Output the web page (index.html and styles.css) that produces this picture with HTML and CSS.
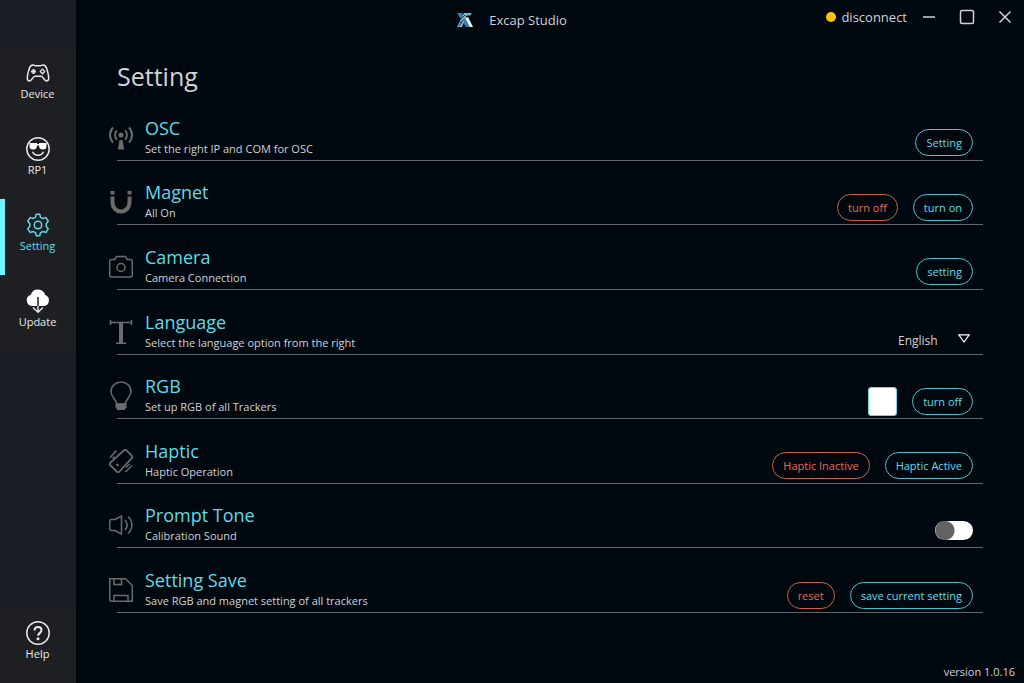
FILE: index.html
```
<!DOCTYPE html>
<html lang="en">
<head>
    <meta charset="UTF-8">
    <meta name="viewport" content="width=device-width, initial-scale=1.0">
    <title>Excap Studio</title>
    <link rel="stylesheet" href="styles.css">
</head>
<body>
    <nav class="sidebar">
        <a class="nav-item" href="#device">
            <svg class="nav-icon" viewBox="0 0 24 24">
                <path d="M7 4c1.300 0 1.600.8 2.600.8h4.800c1 0 1.300-.8 2.600-.8 2 0 3 1.300 3.700 3.400.9 2.800 2 7 2 9.600 0 2-.8 3-2.200 3-2.400 0-3.200-4.700-5.500-4.700H9C6.700 15.300 5.900 20 3.500 20c-1.400 0-2.200-1-2.200-3 0-2.600 1.100-6.800 2-9.600C4 5.300 5 4 7 4z"/>
                <path d="M7.500 8v5M5 10.500h5" stroke-width="2"/>
                <path d="M16.500 8.100l2.200 2.300-2.200 2.300-2.200-2.300z" stroke-width="1.300"/>
            </svg>
            <span>Device</span>
        </a>
        <a class="nav-item" href="#rp1">
            <svg class="nav-icon" viewBox="0 0 24 24">
                <circle cx="12" cy="12" r="11.200"/>
                <path d="M3.500 6h7.500v1h2V6h7.500v3c0 2.500-1 3.500-3.600 3.500S13.300 11.500 13 8.500h-2c-.3 3-1.300 4-3.900 4S3.500 11.500 3.500 9z" fill="#fff" stroke="none"/>
                <path d="M6.500 14.800c1 2.200 3 3.500 5.500 3.500s4.500-1.300 5.500-3.500"/>
            </svg>
            <span>RP1</span>
        </a>
        <a class="nav-item active" href="#setting">
            <svg class="nav-icon" viewBox="0 0 24 24">
                <path d="M10.300 1.200h3.400l.8 3.100 2.200 1.200 3.200-.9 2.300 3.500-2 2.700v2.400l2 2.700-2.300 3.500-3.200-.9-2.200 1.200-.8 3.100h-3.400l-.8-3.100-2.200-1.200-3.200.9-2.300-3.500 2-2.700v-2.400l-2-2.700 2.300-3.500 3.200.9 2.200-1.200z"/>
                <circle cx="12" cy="12" r="3.700"/>
            </svg>
            <span>Setting</span>
        </a>
        <a class="nav-item" href="#update">
            <svg class="nav-icon" viewBox="0 0 24 24">
                <path d="M6 17A5.800 5.800 0 0 1 4.800 5.700 7.500 7.500 0 0 1 19.200 6 5.700 5.700 0 0 1 18 17z" fill="#fff" stroke="none"/>
                <path d="M12 16v7M7 18.500l5 4.700 5-4.700"/>
                <path d="M12 8v9" class="nav-cut"/>
            </svg>
            <span>Update</span>
        </a>
        <a class="nav-item help" href="#help">
            <svg class="nav-icon" viewBox="0 0 24 24">
                <circle cx="12" cy="12" r="11.200"/>
                <path d="M8.500 9.500C8.500 7.200 10 6 12 6s3.500 1.200 3.500 3.200c0 2.600-3.400 2.800-3.400 5.600" stroke-width="2"/>
                <circle cx="12" cy="17.700" r="1.500" fill="currentColor" stroke="none"/>
            </svg>
            <span>Help</span>
        </a>
    </nav>

    <main class="content">
        <header class="titlebar">
            <div class="app-title">
                <svg class="logo" viewBox="0 0 16 14">
                    <path d="M0 0h5l9 14H9z" fill="#347db0"/>
                    <path d="M7 0h8l-2 2.500H9.500L5 14H0z" fill="#7db4cf"/>
                    <path d="M4 6l4-4M3 10l6-5M2 13l3-4" stroke="#123850" stroke-width="1"/>
                    <path d="M8 5l3-1 5 10h-3z" fill="#e3f3f7"/>
                </svg>
                <span>Excap Studio</span>
            </div>
            <div class="window-bar">
                <span class="status"><i class="status-dot"></i>disconnect</span>
                <button class="window-btn" aria-label="Minimize">
                    <svg viewBox="0 0 16 16"><path d="M2 8h12"/></svg>
                </button>
                <button class="window-btn" aria-label="Maximize">
                    <svg viewBox="0 0 16 16"><rect x="1.500" y="1.500" width="13" height="13" rx="1.500"/></svg>
                </button>
                <button class="window-btn" aria-label="Close">
                    <svg viewBox="0 0 16 16"><path d="M2.500 2.500l11 11M13.500 2.500l-11 11"/></svg>
                </button>
            </div>
        </header>

        <h1 class="page-title">Setting</h1>

        <ul class="settings">
            <li class="row">
                <svg class="row-icon" viewBox="0 0 24 24">
                    <circle cx="12" cy="9" r="2.500" class="solid"/>
                    <path d="M10.500 14h3l1.700 9.500H8.800z" class="solid"/>
                    <path d="M7.800 4.500c-2.200 2.600-2.200 6.400 0 9M16.200 4.500c2.200 2.600 2.200 6.400 0 9M4 1.500c-4 4.400-4 10.600 0 15M20 1.500c4 4.400 4 10.600 0 15" stroke-width="2"/>
                </svg>
                <div class="row-text">
                    <h2>OSC</h2>
                    <p>Set the right IP and COM for OSC</p>
                </div>
                <div class="actions">
                    <button class="btn">Setting</button>
                </div>
            </li>
            <li class="row">
                <svg class="row-icon" viewBox="0 0 24 24">
                    <path d="M3.500 6.500V13a8.500 8.500 0 0 0 17 0V6.500M3.500 1v3.500M20.500 1v3.500" stroke-width="4"/>
                </svg>
                <div class="row-text">
                    <h2>Magnet</h2>
                    <p>All On</p>
                </div>
                <div class="actions">
                    <button class="btn danger">turn off</button>
                    <button class="btn">turn on</button>
                </div>
            </li>
            <li class="row">
                <svg class="row-icon" viewBox="0 0 24 24">
                    <path d="M2.500 4.500H6l1.500-3h9l1.500 3h3.500q1.800 0 1.800 1.800v14q0 1.700-1.800 1.700h-19Q.7 22 .7 20.300v-14q0-1.800 1.800-1.800z"/>
                    <circle cx="12" cy="12.500" r="4"/>
                </svg>
                <div class="row-text">
                    <h2>Camera</h2>
                    <p>Camera Connection</p>
                </div>
                <div class="actions">
                    <button class="btn">setting</button>
                </div>
            </li>
            <li class="row">
                <svg class="row-icon" viewBox="0 0 24 24">
                    <path d="M1.500 0v5M22.500 0v5M1 2.500h22M7 23.200h10"/>
                    <path d="M12 2.500v21" stroke-width="4"/>
                </svg>
                <div class="row-text">
                    <h2>Language</h2>
                    <p id="language-hint">Select the language option from the right</p>
                </div>
                <div class="actions">
                    <select class="language" aria-labelledby="language-hint">
                        <option>English</option>
                    </select>
                    <svg class="arrow" viewBox="0 0 12 9"><path d="M.8.8h10.400L6 8z"/></svg>
                </div>
            </li>
            <li class="row">
                <svg class="row-icon tall" viewBox="0 0 24 30">
                    <path d="M8 23C7 18 2 16 2 10.500a10 9.500 0 0 1 20 0C22 16 17 18 16 23z"/>
                    <path d="M6.500 22.500h11v4l-2 2.500h-7l-2-2.500z" class="solid"/>
                </svg>
                <div class="row-text">
                    <h2>RGB</h2>
                    <p>Set up RGB of all Trackers</p>
                </div>
                <div class="actions">
                    <button class="swatch" aria-label="Color"></button>
                    <button class="btn">turn off</button>
                </div>
            </li>
            <li class="row">
                <svg class="row-icon" viewBox="0 0 24 24">
                    <path d="M15.500.8q.8-.6 1.600 0l5.900 6.400q.8.800 0 1.700L10 23q-.8.800-1.700 0L1 15.800q-.8-.8 0-1.600z" stroke-width="1.800"/>
                    <path d="M1 8.500L7.500 1.500M3.500 9.500l2-2M16.500 23l6.500-6.500M17 18.500l3.500-3.500"/>
                    <circle cx="8.500" cy="16" r="1.300" class="solid"/>
                </svg>
                <div class="row-text">
                    <h2>Haptic</h2>
                    <p>Haptic Operation</p>
                </div>
                <div class="actions">
                    <button class="btn danger">Haptic Inactive</button>
                    <button class="btn">Haptic Active</button>
                </div>
            </li>
            <li class="row">
                <svg class="row-icon" viewBox="0 0 24 24">
                    <path d="M12.500 3v18L6 17.500H2.500Q.8 17.500.8 15.800V8.200q0-1.700 1.700-1.700H6z"/>
                    <path d="M16 7c2.600 3 2.600 7 0 10M19 3.500c5.200 5 5.200 12 0 17"/>
                </svg>
                <div class="row-text">
                    <h2>Prompt Tone</h2>
                    <p id="tone-hint">Calibration Sound</p>
                </div>
                <div class="actions">
                    <input type="checkbox" class="toggle" aria-labelledby="tone-hint">
                </div>
            </li>
            <li class="row">
                <svg class="row-icon" viewBox="0 0 24 24">
                    <path d="M1 .8h15.500L23.300 7.500v15.700H1.800L.8 22V.8zM5 1v5.500h7.500V1M5 23v-5.500h14V23"/>
                </svg>
                <div class="row-text">
                    <h2>Setting Save</h2>
                    <p>Save RGB and magnet setting of all trackers</p>
                </div>
                <div class="actions">
                    <button class="btn danger">reset</button>
                    <button class="btn">save current setting</button>
                </div>
            </li>
        </ul>

        <footer class="version">version 1.0.16</footer>
    </main>
</body>
</html>
```
FILE: styles.css
```
* {
    box-sizing: border-box;
    margin: 0;
    padding: 0;
}

body {
    display: flex;
    min-height: 100vh;
    background: #00080f;
    color: #d0d2d4;
    font-family: "Open Sans", "Noto Sans", sans-serif;
    font-size: 11px;
}

button,
select {
    font: inherit;
    color: inherit;
    background: none;
    border: none;
}

svg {
    fill: none;
    stroke: currentColor;
    stroke-width: 1.5;
}

/* sidebar */
.sidebar {
    display: flex;
    flex-direction: column;
    width: 76px;
    padding-top: 47px;
    background: #1a1d26;
}

.nav-item {
    display: flex;
    flex-direction: column;
    align-items: center;
    justify-content: center;
    gap: 1px;
    height: 76px;
    padding-bottom: 7px;
    border-left: 5px solid transparent;
    border-right: 6px solid transparent;
    background: #1e1f23;
    color: #e8e8e8;
    line-height: 16px;
    text-decoration: none;
}

.nav-item.active {
    border-left-color: #6ff2ff;
    color: #5fdbe6;
}

.nav-item.help {
    margin-top: auto;
}

.nav-icon {
    width: 24px;
    height: 24px;
}

.nav-icon .nav-cut {
    stroke: #1e1f23;
}

/* main area */
.content {
    flex: 1;
    display: flex;
    flex-direction: column;
}

.titlebar {
    display: grid;
    grid-template-columns: 1fr auto 1fr;
    height: 40px;
    padding-right: 76px;
}

.app-title {
    grid-column: 2;
    display: flex;
    align-items: center;
    gap: 16px;
    font-size: 13px;
}

.logo {
    width: 16px;
    height: 14px;
    stroke: none;
}

.window-bar {
    display: flex;
    align-items: center;
    justify-content: flex-end;
    gap: 22px;
    height: 34px;
    margin-right: -65px;
    font-size: 13px;
}

.status {
    display: flex;
    align-items: center;
    gap: 5px;
    margin-right: -8px;
}

.status-dot {
    width: 10px;
    height: 10px;
    border-radius: 50%;
    background: #ffc20e;
}

.window-btn {
    width: 16px;
    height: 16px;
}

.window-btn svg {
    display: block;
}

.page-title {
    height: 56px;
    padding-left: 41px;
    font-size: 25px;
    font-weight: 400;
    line-height: 72px;
}

/* settings list */
.settings {
    flex: 1;
    display: flex;
    flex-direction: column;
    margin: 0 41px 0 33px;
    list-style: none;
}

.row {
    position: relative;
    flex: 1;
    display: flex;
    align-items: flex-end;
    gap: 12px;
    padding: 0 10px 4px 0;
}

.row::after {
    content: "";
    position: absolute;
    left: 8px;
    right: 0;
    bottom: 0;
    height: 1px;
    background: #62676c;
}

.row-icon {
    width: 24px;
    height: 24px;
    margin-bottom: 7px;
    color: #6b6b6b;
}

.row-icon.tall {
    height: 30px;
    margin-bottom: 4px;
}

.solid {
    fill: currentColor;
    stroke: none;
}

.row-text {
    flex: 1;
}

.row-text h2 {
    color: #5fdbe6;
    font-size: 18px;
    font-weight: 400;
    line-height: 26px;
}

.row-text p {
    line-height: 16px;
}

.actions {
    display: flex;
    align-items: center;
    gap: 15px;
    height: 28px;
}

.btn {
    height: 27px;
    padding: 0 10px;
    border: 1px solid #4fc3ce;
    border-radius: 14px;
    color: #5fdbe6;
}

.btn.danger {
    border-color: #cc6048;
    color: #e56a50;
}

.swatch {
    width: 29px;
    height: 29px;
    border: 1px solid #5fdbe6;
    border-radius: 3px;
    background: #fff;
}

.language {
    appearance: none;
    align-self: flex-end;
    width: 45px;
    font-size: 12px;
    line-height: 20px;
}

.arrow {
    width: 12px;
    height: 9px;
    margin: 3px 3px 0 0;
    stroke-width: 1.2;
    color: #fff;
}

.toggle {
    appearance: none;
    width: 38px;
    height: 19px;
    border-radius: 10px;
    background: radial-gradient(circle at 10px 50%, #626262 9px, #fff 10px);
}

.toggle:checked {
    background: radial-gradient(circle at 28px 50%, #fff 9px, #5fdbe6 10px);
}

.version {
    display: flex;
    align-items: flex-end;
    justify-content: flex-end;
    height: 70px;
    padding: 0 9px 4px;
    line-height: 15px;
}
```
